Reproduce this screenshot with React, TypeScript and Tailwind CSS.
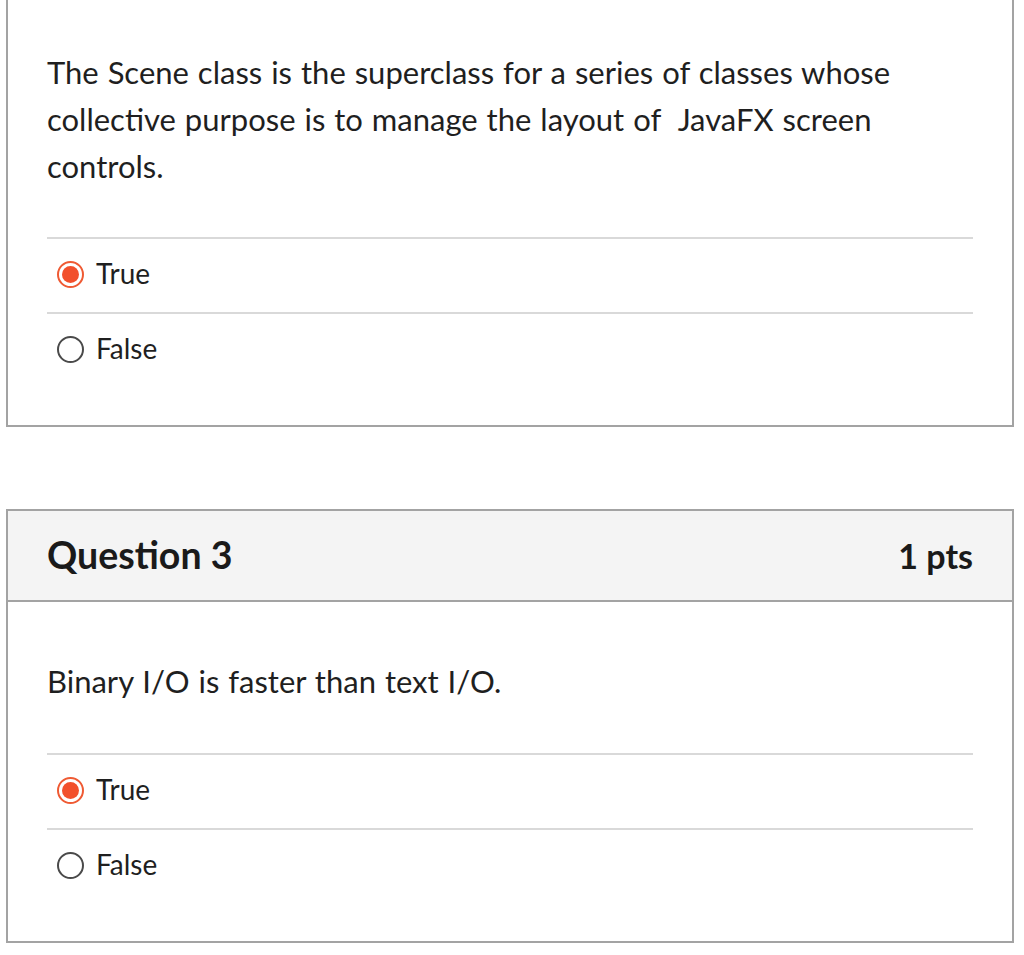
const font = { fontFamily: "Lato, 'Noto Sans', sans-serif" }

function Radio({ checked }: { checked: boolean }) {
  if (checked) {
    return (
      <span className="flex h-[27px] w-[27px] shrink-0 items-center justify-center rounded-full border-2 border-[#ef5a33] bg-white">
        <span className="h-[17px] w-[17px] rounded-full bg-[#f2502c]" />
      </span>
    )
  }
  return <span className="h-[27px] w-[27px] shrink-0 rounded-full border-2 border-[#4a4a4a] bg-white" />
}

function Answers({ selected }: { selected: string }) {
  return (
    <div>
      {["True", "False"].map((label) => (
        <div
          key={label}
          className="flex h-[75px] items-center gap-[12px] border-t-2 border-[#d9d9d9] pb-[3px] pl-[10px]"
        >
          <Radio checked={label === selected} />
          <span className="mb-[3px] text-[28px] text-[#1f1f1f]">{label}</span>
        </div>
      ))}
    </div>
  )
}

export default function App() {
  return (
    <div className="min-h-[955px] bg-white pl-[6px]" style={font}>
      <div className="w-[1008px] border-x-2 border-b-2 border-[#a3a3a3] px-[39px] pt-[49px] pb-[38px]">
        <p className="mb-[47px] text-[31px] leading-[47px] text-[#1f1f1f] [word-spacing:1px]">
          The Scene class is the superclass for a series of classes whose
          <br />
          collective purpose is to manage the layout of&nbsp; JavaFX screen
          <br />
          controls.
        </p>
        <Answers selected="True" />
      </div>

      <div className="mt-[82px] w-[1008px] border-2 border-[#a3a3a3]">
        <div className="flex h-[91px] items-center justify-between border-b-2 border-[#a3a3a3] bg-[#f4f4f4] px-[39px]">
          <h2 className="text-[37.5px] font-bold text-[#1a1a1a]">Question 3</h2>
          <span className="text-[34px] font-bold text-[#1a1a1a]">1 pts</span>
        </div>
        <div className="px-[39px] pt-[56px] pb-[38px]">
          <p className="mb-[48px] text-[31px] leading-[47px] text-[#1f1f1f] [word-spacing:1px]">
            Binary I/O is faster than text I/O.
          </p>
          <Answers selected="True" />
        </div>
      </div>
    </div>
  )
}
